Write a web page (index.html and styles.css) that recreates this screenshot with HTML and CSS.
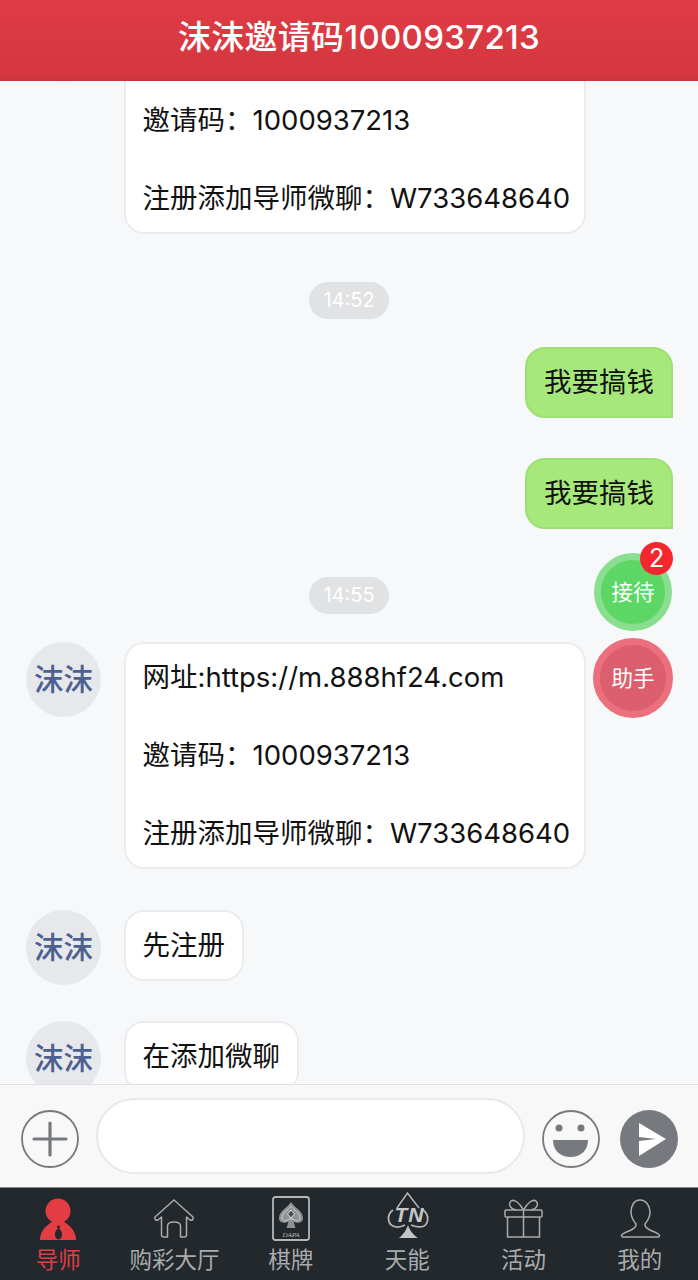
FILE: index.html
```html
<!DOCTYPE html>
<html lang="zh-CN">
<head>
    <meta charset="UTF-8">
    <meta name="viewport" content="width=device-width, initial-scale=1.0">
    <title>沫沫邀请码1000937213</title>
    <link rel="stylesheet" href="styles.css">
</head>
<body>
    <div class="app">
        <header class="title-bar">沫沫邀请码1000937213</header>

        <main class="chat">
            <div class="msg">
                <div class="avatar">沫沫</div>
                <div class="bubble bubble-wide">网址:https://m.888hf24.com<br><br>邀请码：1000937213<br><br>注册添加导师微聊：W733648640</div>
            </div>

            <div class="time"><span>14:52</span></div>

            <div class="msg msg-self"><div class="bubble">我要搞钱</div></div>
            <div class="msg msg-self"><div class="bubble">我要搞钱</div></div>

            <div class="time"><span>14:55</span></div>

            <div class="msg">
                <div class="avatar">沫沫</div>
                <div class="bubble bubble-wide">网址:https://m.888hf24.com<br><br>邀请码：1000937213<br><br>注册添加导师微聊：W733648640</div>
            </div>
            <div class="msg">
                <div class="avatar">沫沫</div>
                <div class="bubble">先注册</div>
            </div>
            <div class="msg">
                <div class="avatar">沫沫</div>
                <div class="bubble">在添加微聊</div>
            </div>

            <button class="float float-green">接待<span class="badge">2</span></button>
            <button class="float float-red">助手</button>
        </main>

        <div class="composer">
            <svg class="composer-icon" viewBox="0 0 58 58">
                <circle cx="29" cy="29" r="28" fill="none" stroke="#76797e" stroke-width="1.8"/>
                <path d="M29 13V45M13 29H45" stroke="#76797e" stroke-width="3.2" stroke-linecap="round"/>
            </svg>
            <div class="composer-input"></div>
            <svg class="composer-icon" viewBox="0 0 58 58">
                <circle cx="29" cy="29" r="28" fill="none" stroke="#76797e" stroke-width="1.8"/>
                <circle cx="17" cy="18" r="3.500" fill="#76797e"/>
                <circle cx="39" cy="18" r="3.500" fill="#76797e"/>
                <path d="M11 30H46C46 41 38 47 28.500 47S11 41 11 30Z" fill="#76797e"/>
            </svg>
            <svg class="composer-icon composer-send" viewBox="0 0 58 58">
                <circle cx="29" cy="29" r="29" fill="#76797e"/>
                <path d="M19 13L46 29L19 46V31L36 29L19 27Z" fill="#fff"/>
            </svg>
        </div>

        <nav class="tabs">
            <div class="tab tab-active">
                <svg class="tab-icon" viewBox="0 0 44 46">
                    <circle cx="22" cy="15" r="12.500" fill="#e23d43"/>
                    <path d="M4 44C4 36 9 30 16 26H28C35 30 40 36 40 44Z" fill="#e23d43"/>
                    <circle cx="22.500" cy="31" r="1.600" fill="#22282c"/>
                    <path d="M22.500 32C25 34 26.500 37 26 39.500C25.500 42 24 43.500 22.500 43.500S19.500 42 19 39.500C18.500 37 20 34 22.500 32Z" fill="#22282c"/>
                </svg>
                <span>导师</span>
            </div>
            <div class="tab">
                <svg class="tab-icon" viewBox="0 0 44 46">
                    <path d="M22 4L41 21C42 23 40 25 38 24L34.500 21V39C34.500 40.500 34 41 32 41H28.500V30C28.500 27 25.500 26 22 26S15.500 27 15.500 30V41H12C10 41 9.500 40.500 9.500 39V21L6 24C4 25 2 23 3 21Z" fill="none" stroke="#a9abac" stroke-width="1.500" stroke-linejoin="round"/>
                </svg>
                <span>购彩大厅</span>
            </div>
            <div class="tab">
                <svg class="tab-icon" viewBox="0 0 44 46">
                    <rect x="4" y="1" width="36" height="43" rx="2.500" fill="none" stroke="#b4b6b8" stroke-width="1.800"/>
                    <path d="M22 6C25 11 34 15 34 22C34 27 28 28 24.500 25.500L26.500 32H17.500L19.500 25.500C16 28 10 27 10 22C10 15 19 11 22 6Z" fill="#8f9192"/>
                    <path d="M22 10C25 14 31 17 31 22C31 25 27 25.500 24 23H20C17 25.500 13 25 13 22C13 17 19 14 22 10Z" fill="none" stroke="#cfcfcf" stroke-width="1"/>
                    <path d="M22 14L25.500 18L22 22L18.500 18Z" fill="#4a4e50" stroke="#e4e4e4" stroke-width="1"/>
                    <text x="22" y="41" class="tab-icon-text">DAPA</text>
                </svg>
                <span>棋牌</span>
            </div>
            <div class="tab">
                <svg class="tab-icon" viewBox="0 0 44 46">
                    <path d="M12 12L22.500 -3L34 12" fill="none" stroke="#b4b6b8" stroke-width="1.500"/>
                    <path d="M8 14C2 18 2 27 8 30C12 32 16 31 20 29M38 14C44 18 44 27 39 30C35 32 31 31 26 29" fill="none" stroke="#b4b6b8" stroke-width="1.800"/>
                    <path d="M23 29C24 33 28 39 33 42H14C18 39 22 33 23 29Z" fill="#c4c4c4"/>
                    <text x="24.500" y="26" class="tab-icon-logo">TN</text>
                </svg>
                <span>天能</span>
            </div>
            <div class="tab">
                <svg class="tab-icon" viewBox="0 0 44 46">
                    <rect x="4" y="14" width="37" height="7" rx="1" fill="none" stroke="#a9abac" stroke-width="1.500"/>
                    <path d="M6.500 21V41H38.500V21M22.500 14V41" fill="none" stroke="#a9abac" stroke-width="1.500"/>
                    <path d="M22.500 14C18 6 13 3 10 5C7 8 9 13 15 14M22.500 14C27 6 32 3 35 5C38 8 36 13 30 14" fill="none" stroke="#a9abac" stroke-width="1.500"/>
                </svg>
                <span>活动</span>
            </div>
            <div class="tab">
                <svg class="tab-icon" viewBox="0 0 44 46">
                    <path d="M22 4C16 4 13 10 13 16C13 21 15.500 25 18 28C18.500 31 16 32.500 13 34C9 36 4 37.500 3.500 39.500C3.500 40.500 4 41 5 41H40C41 41 41.500 40.500 41.500 39.500C41 37.500 36 36 32 34C29 32.500 26.500 31 27 28C29.500 25 32 21 32 16C32 10 28 4 22 4Z" fill="none" stroke="#a9abac" stroke-width="1.500"/>
                </svg>
                <span>我的</span>
            </div>
        </nav>
    </div>
</body>
</html>
```

FILE: styles.css
```css
* {
    box-sizing: border-box;
}
body {
    margin: 0;
    font-family: Inter, 'Noto Sans CJK SC', sans-serif;
    background: #f7f8fa;
}
.app {
    position: relative;
    display: flex;
    flex-direction: column;
    height: 1280px;
    overflow: hidden;
}
.title-bar {
    position: absolute;
    top: 0;
    left: 0;
    right: 0;
    z-index: 2;
    height: 81px;
    padding-left: 20px;
    line-height: 74px;
    text-align: center;
    color: #fff;
    font-size: 33px;
    font-weight: 500;
    letter-spacing: 0.3px;
    background: linear-gradient(180deg, #df3c45, #d4373f 92%, #c9353c);
}
.chat {
    position: relative;
    flex: 1;
    min-height: 0;
    overflow: hidden;
    padding: 7px 26px 0;
}
.msg {
    display: flex;
    align-items: flex-start;
    gap: 23px;
    margin-bottom: 40.400px;
}
.msg-self {
    justify-content: flex-end;
}
.avatar {
    flex: none;
    width: 75px;
    height: 75px;
    margin-bottom: -4px;
    border-radius: 50%;
    background: #e6e8ec;
    color: #4c6190;
    font-size: 29.500px;
    font-weight: 500;
    line-height: 75px;
    text-align: center;
}
.bubble {
    padding: 14px 16.500px;
    font-size: 27.500px;
    line-height: 39px;
    color: #111;
    background: #fff;
    border: 2px solid #ebecee;
    border-radius: 20px;
    white-space: nowrap;
}
.bubble-wide {
    width: 462px;
}
.msg-self .bubble {
    padding: 14px 17px;
    background: #a6e97a;
    border-color: #9ee074;
    border-bottom-right-radius: 0;
    margin-right: -1px;
}
.time {
    display: flex;
    justify-content: center;
    margin: 48px 0 28px;
}
.time span {
    width: 80px;
    height: 37px;
    line-height: 37px;
    text-align: center;
    border-radius: 19px;
    background: #e1e2e3;
    color: #fff;
    font-size: 20px;
}
.float {
    position: absolute;
    display: block;
    padding: 0 0 4px;
    color: #fff;
    font-family: inherit;
    font-size: 21.500px;
    border-radius: 50%;
}
.float-green {
    left: 594px;
    top: 553px;
    width: 78px;
    height: 78px;
    background: #5cd765;
    border: 7px solid #8ade8f;
}
.float-red {
    left: 593px;
    top: 638px;
    width: 80px;
    height: 80px;
    background: #dc5f6d;
    border: 7px solid #ec6f7d;
}
.badge {
    position: absolute;
    top: -18px;
    right: -8px;
    width: 33px;
    height: 33px;
    line-height: 33px;
    border-radius: 50%;
    background: #f5262e;
    font-size: 25px;
}
.composer {
    display: flex;
    align-items: center;
    gap: 17px;
    height: 104px;
    padding: 0 20px 0 21px;
    background: #f8f8f8;
    border-top: 1px solid #dfe0e2;
    border-bottom: 1px solid #8a8c8e;
}
.composer-icon {
    flex: none;
    width: 58px;
    height: 58px;
    margin-top: 6px;
}
.composer-send {
    margin-left: 3px;
}
.composer-input {
    flex: none;
    width: 429px;
    height: 76px;
    background: #fff;
    border: 2px solid #e9e9e9;
    border-radius: 38px;
}
.tabs {
    display: grid;
    grid-template-columns: repeat(6, 1fr);
    height: 92px;
    background: #22282c;
}
.tab {
    display: flex;
    flex-direction: column;
    align-items: center;
    padding-top: 8px;
    color: #a9abac;
    font-size: 22.500px;
    line-height: 28px;
}
.tab-active {
    color: #e23d43;
}
.tab-icon {
    width: 44px;
    height: 46px;
    margin-bottom: 4px;
    overflow: visible;
}
.tab-icon-text {
    fill: #b4b6b8;
    font-family: 'Liberation Serif', serif;
    font-size: 7px;
    font-style: italic;
    text-anchor: middle;
}
.tab-icon-logo {
    fill: #c8c8c8;
    font-family: 'Liberation Sans', sans-serif;
    font-size: 21px;
    font-weight: 700;
    font-style: italic;
    letter-spacing: 1px;
    text-anchor: middle;
}
```
